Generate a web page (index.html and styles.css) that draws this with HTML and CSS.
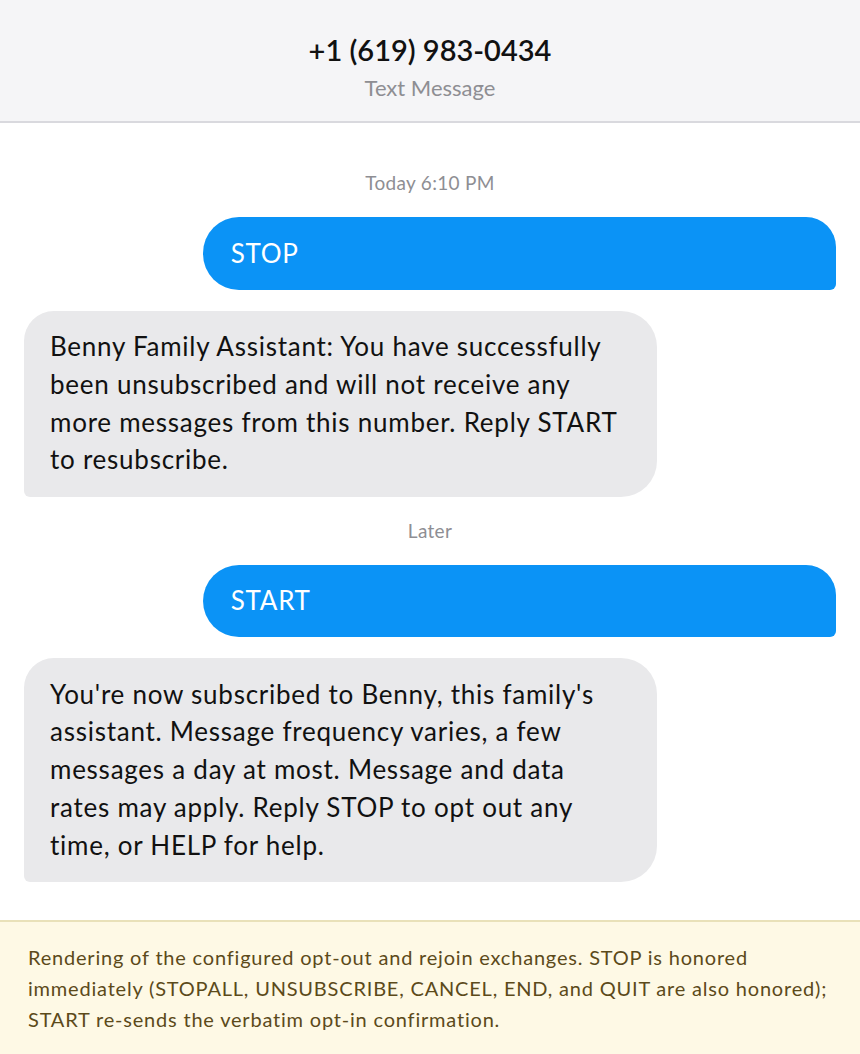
FILE: index.html
```html
<!DOCTYPE html>
<html lang="en">
<head>
  <meta charset="UTF-8">
  <title>Benny - Text Message</title>
  <meta name="viewport" content="width=device-width, initial-scale=1.0">
  <link rel="stylesheet" href="styles.css">
</head>
<body>
<div class="phone">
  <header class="thread-header">
    <div class="contact">+1 (619) 983-0434</div>
    <div class="channel">Text Message</div>
  </header>

  <main class="thread">
    <div class="stamp">Today 6:10 PM</div>
    <div class="bubble sent">STOP</div>
    <div class="bubble received">Benny Family Assistant: You have successfully been unsubscribed and will not receive any more messages from this number. Reply START to resubscribe.</div>

    <div class="stamp">Later</div>
    <div class="bubble sent">START</div>
    <div class="bubble received">You're now subscribed to Benny, this family's assistant. Message frequency varies, a few messages a day at most. Message and data rates may apply. Reply STOP to opt out any time, or HELP for help.</div>
  </main>

  <footer class="note">
    Rendering of the configured opt-out and rejoin exchanges. STOP is honored immediately (STOPALL, UNSUBSCRIBE, CANCEL, END, and QUIT are also honored); START re-sends the verbatim opt-in confirmation.
  </footer>
</div>
</body>
</html>
```

FILE: styles.css
```css
* { box-sizing: border-box; }
body {
  font-family: 'Segoe UI', Lato, 'Noto Sans', sans-serif;
  background: #ffffff;
  color: #111111;
  margin: 0;
}
.thread-header {
  background: #f5f5f7;
  border-bottom: 2px solid #d9d9de;
  text-align: center;
  padding: 32px 0 18px;
}
.contact {
  font-size: 29px;
  font-weight: 600;
  line-height: 36px;
  color: #111111;
}
.channel {
  font-size: 22px;
  line-height: 30px;
  margin-top: 5px;
  color: #8e8e93;
}
.thread {
  display: flex;
  flex-direction: column;
  gap: 21px;
  padding: 47px 24px 38px;
}
.stamp {
  text-align: center;
  font-size: 19px;
  line-height: 26px;
  letter-spacing: 0.3px;
  color: #8e8e93;
}
.bubble {
  width: 78%;
  font-size: 26px;
  line-height: 37.7px;
  letter-spacing: 0.75px;
  padding: 17.5px 26px;
}
.sent {
  align-self: flex-end;
  background: #0b93f6;
  color: #ffffff;
  padding-left: 28px;
  border-radius: 36px 30px 6px 36px;
}
.received {
  align-self: flex-start;
  background: #e9e9eb;
  color: #111111;
  border-radius: 30px 36px 36px 6px;
}
.note {
  background: #fef9e5;
  border-top: 2px solid #e9e1b9;
  color: #5c4a1a;
  font-size: 20px;
  line-height: 31px;
  letter-spacing: 0.8px;
  padding: 20px 4px 24px 28px;
}
```
